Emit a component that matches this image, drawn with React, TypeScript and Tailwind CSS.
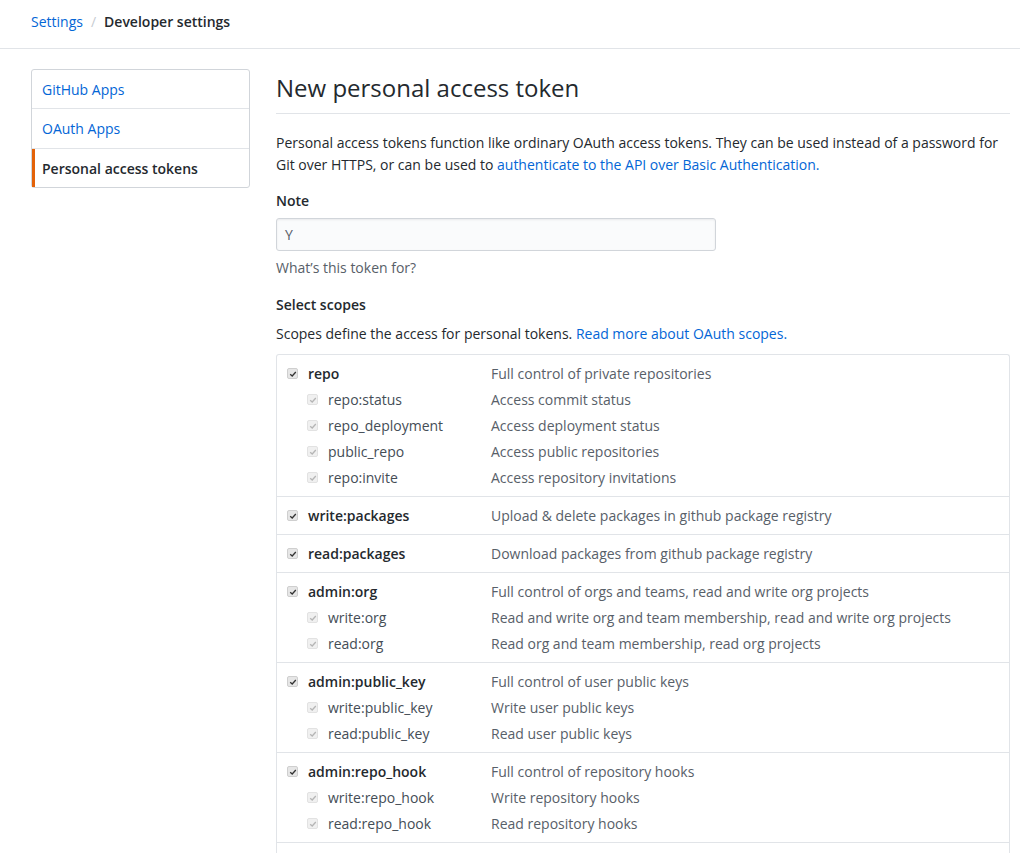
import { Fragment } from "react";

type Scope = { name: string; desc: string; subs?: { name: string; desc: string }[] };

const scopes: Scope[] = [
  {
    name: "repo",
    desc: "Full control of private repositories",
    subs: [
      { name: "repo:status", desc: "Access commit status" },
      { name: "repo_deployment", desc: "Access deployment status" },
      { name: "public_repo", desc: "Access public repositories" },
      { name: "repo:invite", desc: "Access repository invitations" },
    ],
  },
  { name: "write:packages", desc: "Upload & delete packages in github package registry" },
  { name: "read:packages", desc: "Download packages from github package registry" },
  {
    name: "admin:org",
    desc: "Full control of orgs and teams, read and write org projects",
    subs: [
      { name: "write:org", desc: "Read and write org and team membership, read and write org projects" },
      { name: "read:org", desc: "Read org and team membership, read org projects" },
    ],
  },
  {
    name: "admin:public_key",
    desc: "Full control of user public keys",
    subs: [
      { name: "write:public_key", desc: "Write user public keys" },
      { name: "read:public_key", desc: "Read user public keys" },
    ],
  },
  {
    name: "admin:repo_hook",
    desc: "Full control of repository hooks",
    subs: [
      { name: "write:repo_hook", desc: "Write repository hooks" },
      { name: "read:repo_hook", desc: "Read repository hooks" },
    ],
  },
  {
    name: "admin:org_hook",
    desc: "Full control of organization hooks",
  },
];

function Check({ muted }: { muted?: boolean }) {
  return (
    <span
      className={`flex h-[11px] w-[11px] items-center justify-center rounded-[2px] border ${
        muted ? "border-[#e2e2e2] bg-[#f0f0f0]" : "border-[#cfcfcf] bg-[#e6e6e6]"
      }`}
    >
      <svg viewBox="0 0 10 10" className="h-[8px] w-[8px]">
        <path
          d="M1.5 5.2 L4 7.5 L8.5 2.5"
          fill="none"
          stroke={muted ? "#b5b5b5" : "#333"}
          strokeWidth="1.6"
        />
      </svg>
    </span>
  );
}

export default function App() {
  return (
    <div className="h-[853px] overflow-hidden bg-white text-[14px] text-[#24292e] [font-family:'Open_Sans',sans-serif]">
      {/* breadcrumb */}
      <div className="flex h-[49px] items-center border-b border-[#e1e4e8] pb-[6px] pl-[31px]">
        <a className="text-[#0366d6]">Settings</a>
        <span className="mx-[8px] text-[#c6cbd1]">/</span>
        <span className="font-semibold text-[#24292e]">Developer settings</span>
      </div>

      <div className="flex gap-[26px] pl-[31px] pr-[10px] pt-[20px]">
        {/* sidebar */}
        <nav className="flex h-[119px] w-[219px] shrink-0 flex-col rounded-[3px] border border-[#d1d5da]">
          <a className="flex h-[39px] items-center border-b border-[#e1e4e8] pl-[10px] text-[#0366d6]">GitHub Apps</a>
          <a className="flex h-[40px] items-center border-b border-[#e1e4e8] pl-[10px] text-[#0366d6]">OAuth Apps</a>
          <a className="flex h-[38px] items-center border-l-[3px] border-[#e36209] pl-[7px] font-semibold text-[#24292e]">
            Personal access tokens
          </a>
        </nav>

        {/* main */}
        <main className="flex-1">
          <h2 className="mt-[4px] border-b border-[#e1e4e8] pb-[10px] text-[24px] font-normal leading-[30px] text-[#24292e]">
            New personal access token
          </h2>
          <p className="mt-[18px] leading-[22px]">
            Personal access tokens function like ordinary OAuth access tokens. They can be used instead of a password for
            Git over HTTPS, or can be used to{" "}
            <a className="text-[#0366d6]">authenticate to the API over Basic Authentication.</a>
          </p>

          <div className="mt-[15px] font-semibold leading-[20px]">Note</div>
          <div className="mt-[7px] flex h-[33px] w-[440px] items-center rounded-[3px] border border-[#d1d5da] bg-[#fafbfc] px-[8px] text-[#586069] shadow-[inset_0_1px_2px_rgba(27,31,35,0.075)]">
            Y
          </div>
          <div className="mt-[7px] leading-[20px] text-[#586069]">What&rsquo;s this token for?</div>

          <div className="mt-[17px] font-semibold leading-[20px]">Select scopes</div>
          <p className="mt-[9px] leading-[20px]">
            Scopes define the access for personal tokens.{" "}
            <a className="text-[#0366d6]">Read more about OAuth scopes.</a>
          </p>

          <div className="mt-[10px] rounded-[3px] border-x border-t border-[#e1e4e8]">
            {scopes.map((s) => (
              <div key={s.name} className="border-b border-[#e1e4e8] py-[5.5px] pl-[10px]">
                <div className="grid grid-cols-[204px_1fr] auto-rows-[26px] leading-[26px]">
                  <div className="flex items-center">
                    <Check />
                    <span className="ml-[10px] font-semibold">{s.name}</span>
                  </div>
                  <div className="text-[#586069]">{s.desc}</div>
                  {s.subs?.map((sub) => (
                    <Fragment key={sub.name}>
                      <div className="flex items-center pl-[20px]">
                        <Check muted />
                        <span className="ml-[10px] text-[#444d56]">{sub.name}</span>
                      </div>
                      <div className="text-[#586069]">{sub.desc}</div>
                    </Fragment>
                  ))}
                </div>
              </div>
            ))}
          </div>
        </main>
      </div>
    </div>
  );
}
